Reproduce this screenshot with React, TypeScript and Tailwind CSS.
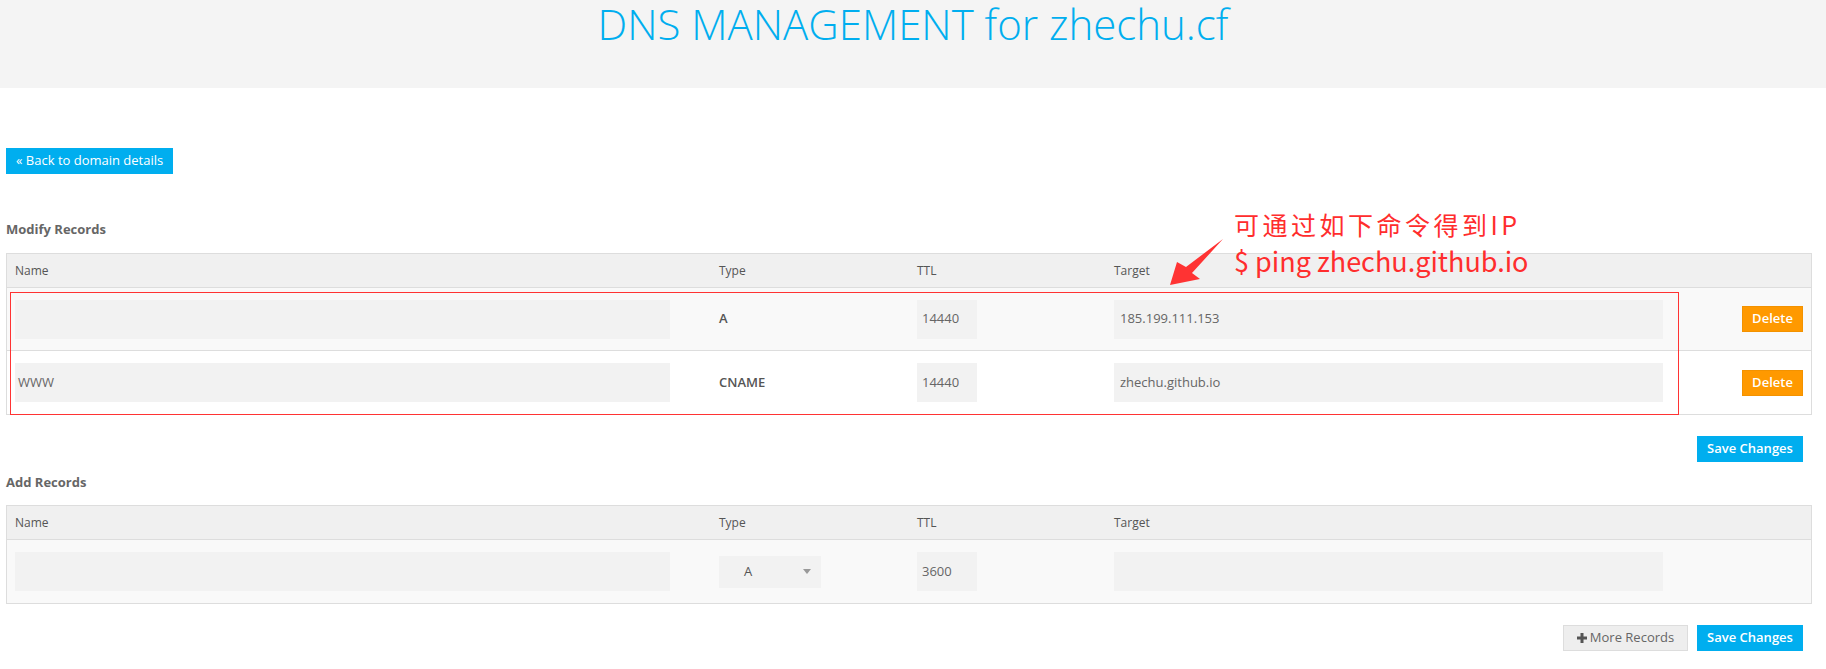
import React from "react";

const font = "font-['Open_Sans',sans-serif]";

function HeaderRow() {
  return (
    <div className="grid h-[34px] grid-cols-[704px_198px_197px_1fr] items-center border-b border-[#ddd] bg-[#f0f0f0] text-[12px] text-[#555]">
      <div className="pl-[8px]">Name</div>
      <div className="pl-[8px]">Type</div>
      <div className="pl-[8px]">TTL</div>
      <div className="pl-[8px]">Target</div>
    </div>
  );
}

function Field({ value, className }: { value?: string; className: string }) {
  return (
    <div className={`flex h-[39px] items-center bg-[#f2f2f2] text-[13px] text-[#666] ${className}`}>
      {value}
    </div>
  );
}

function RecordRow({ name, type, target, striped, last }: { name: string; type: string; target: string; striped: boolean; last?: boolean }) {
  return (
    <div
      className={`grid h-[63px] grid-cols-[704px_198px_197px_1fr_auto] items-center ${striped ? "bg-[#f9f9f9]" : "bg-white"} ${last ? "" : "border-b border-[#ddd]"}`}
    >
      <div className="pl-[8px]">
        <Field value={name} className="w-[655px] pl-[3px]" />
      </div>
      <div className="pl-[8px] text-[13px] font-semibold text-[#555]">{type}</div>
      <div className="pl-[8px]">
        <Field value="14440" className="w-[60px] pl-[5px]" />
      </div>
      <div className="pl-[8px]">
        <Field value={target} className="w-[549px] pl-[6px]" />
      </div>
      <div className="pr-[8px]">
        <button className="h-[26px] w-[61px] border border-[#f39200] bg-[#ff9900] text-[13px] font-semibold text-white">
          Delete
        </button>
      </div>
    </div>
  );
}

export default function App() {
  return (
    <div className={`relative min-h-[669px] bg-white ${font} text-[13px] text-[#666]`}>
      <div className="h-[88px] bg-[#f4f4f4] pt-[1px] text-center">
        <h1 className="text-[42px] font-light leading-[46px] text-[#00aeef]">DNS MANAGEMENT for zhechu.cf</h1>
      </div>

      <div className="pl-[6px] pr-[14px]">
        <div className="pt-[60px]">
          <button className="h-[26px] w-[167px] bg-[#00aeef] text-left pl-[10px] text-[13px] text-white">
            « Back to domain details
          </button>
        </div>

        <h3 className="mt-[46px] mb-[15px] text-[13px] font-bold leading-[18px] text-[#666]">Modify Records</h3>

        <div className="border border-[#ddd]">
          <HeaderRow />
          <RecordRow name="" type="A" target="185.199.111.153" striped />
          <RecordRow name="WWW" type="CNAME" target="zhechu.github.io" striped={false} last />
        </div>

        <div className="mt-[21px] flex justify-end pr-[9px]">
          <button className="h-[26px] w-[106px] bg-[#00aeef] text-[13px] font-semibold text-white">Save Changes</button>
        </div>

        <h3 className="mt-[11px] mb-[14px] text-[13px] font-bold leading-[18px] text-[#666]">Add Records</h3>

        <div className="border border-[#ddd]">
          <HeaderRow />
          <div className="grid h-[63px] grid-cols-[704px_198px_197px_1fr] items-center bg-[#f9f9f9]">
            <div className="pl-[8px]">
              <Field className="w-[655px]" />
            </div>
            <div className="pl-[8px]">
              <div className="flex h-[32px] w-[102px] items-center justify-between bg-[#f2f2f2] pl-[25px] pr-[10px] text-[13px] text-[#555]">
                <span>A</span>
                <svg width="8" height="5" viewBox="0 0 8 5">
                  <polygon points="0,0 8,0 4,5" fill="#999" />
                </svg>
              </div>
            </div>
            <div className="pl-[8px]">
              <Field value="3600" className="w-[60px] pl-[5px]" />
            </div>
            <div className="pl-[8px]">
              <Field className="w-[549px]" />
            </div>
          </div>
        </div>

        <div className="mt-[21px] flex justify-end gap-[9px] pr-[9px]">
          <button className="flex h-[26px] w-[125px] items-center justify-center gap-[3px] border border-[#ddd] bg-[#eee] text-[13px] text-[#666]">
            <svg width="10" height="10" viewBox="0 0 10 10">
              <path d="M5 0v10M0 5h10" stroke="#555" strokeWidth="3" />
            </svg>
            More Records
          </button>
          <button className="h-[26px] w-[106px] bg-[#00aeef] text-[13px] font-semibold text-white">Save Changes</button>
        </div>
      </div>

      {/* annotation overlay */}
      <div className="absolute left-[10px] top-[292px] h-[123px] w-[1669px] border border-[#ff3333]" />
      <div className="absolute left-[1234px] top-[206px] font-['Noto_Sans_CJK_SC','Noto_Sans',sans-serif] text-[#ff2d2d]">
        <div className="text-[25px] leading-[37px] tracking-[3.5px]">可通过如下命令得到IP</div>
        <div className="text-[27px] leading-[35px]">$ ping zhechu.github.io</div>
      </div>
      <svg className="absolute left-[1165px] top-[235px]" width="62" height="55" viewBox="0 0 62 55">
        <polygon points="5,50 12,27 21,32 58,4 27,38 35,44" fill="#ff3333" />
      </svg>
    </div>
  );
}
